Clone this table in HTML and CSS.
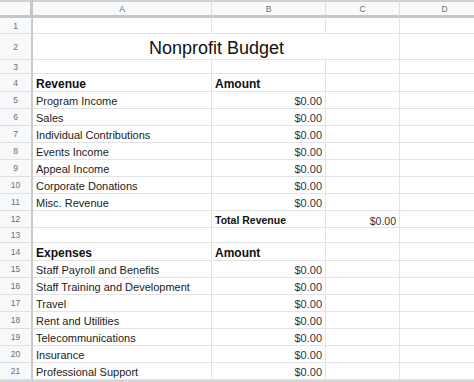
FILE: index.html
```html
<!DOCTYPE html>
<html>
<head>
<meta charset="utf-8">
<link rel="stylesheet" href="styles.css">
</head>
<body>
<div class="sheet">
  <div class="corner"></div>
  <div class="colh">A</div>
  <div class="colh">B</div>
  <div class="colh">C</div>
  <div class="colh">D</div>

  <div class="rowh r-1">1</div><div class="c"></div><div class="c"></div><div class="c"></div><div class="c"></div>

  <div class="rowh">2</div><div class="c title">Nonprofit Budget</div><div class="c"></div>

  <div class="rowh">3</div><div class="c"></div><div class="c"></div><div class="c"></div><div class="c"></div>

  <div class="rowh">4</div><div class="c hd">Revenue</div><div class="c hd">Amount</div><div class="c"></div><div class="c"></div>

  <div class="rowh">5</div><div class="c">Program Income</div><div class="c num">$0.00</div><div class="c"></div><div class="c"></div>
  <div class="rowh">6</div><div class="c">Sales</div><div class="c num">$0.00</div><div class="c"></div><div class="c"></div>
  <div class="rowh">7</div><div class="c">Individual Contributions</div><div class="c num">$0.00</div><div class="c"></div><div class="c"></div>
  <div class="rowh">8</div><div class="c">Events Income</div><div class="c num">$0.00</div><div class="c"></div><div class="c"></div>
  <div class="rowh">9</div><div class="c">Appeal Income</div><div class="c num">$0.00</div><div class="c"></div><div class="c"></div>
  <div class="rowh">10</div><div class="c">Corporate Donations</div><div class="c num">$0.00</div><div class="c"></div><div class="c"></div>
  <div class="rowh">11</div><div class="c">Misc. Revenue</div><div class="c num">$0.00</div><div class="c"></div><div class="c"></div>
  <div class="rowh">12</div><div class="c"></div><div class="c tot">Total Revenue</div><div class="c num small">$0.00</div><div class="c"></div>
  <div class="rowh">13</div><div class="c"></div><div class="c"></div><div class="c"></div><div class="c"></div>

  <div class="rowh">14</div><div class="c hd">Expenses</div><div class="c hd">Amount</div><div class="c"></div><div class="c"></div>

  <div class="rowh">15</div><div class="c">Staff Payroll and Benefits</div><div class="c num">$0.00</div><div class="c"></div><div class="c"></div>
  <div class="rowh">16</div><div class="c">Staff Training and Development</div><div class="c num">$0.00</div><div class="c"></div><div class="c"></div>
  <div class="rowh">17</div><div class="c">Travel</div><div class="c num">$0.00</div><div class="c"></div><div class="c"></div>
  <div class="rowh">18</div><div class="c">Rent and Utilities</div><div class="c num">$0.00</div><div class="c"></div><div class="c"></div>
  <div class="rowh">19</div><div class="c">Telecommunications</div><div class="c num">$0.00</div><div class="c"></div><div class="c"></div>
  <div class="rowh">20</div><div class="c">Insurance</div><div class="c num">$0.00</div><div class="c"></div><div class="c"></div>
  <div class="rowh">21</div><div class="c">Professional Support</div><div class="c num">$0.00</div><div class="c"></div><div class="c"></div>
</div>
<div class="bottombar"></div>
</body>
</html>
```

FILE: styles.css
```css
html, body {
  margin: 0;
  padding: 0;
  background: #ffffff;
  overflow: hidden;
  width: 474px;
  height: 382px;
}

body {
  font-family: "Liberation Sans", Arial, sans-serif;
  color: #222222;
}

.sheet {
  display: grid;
  grid-template-columns: 33px 179px 114px 74px 90px;
  grid-template-rows: 18px 16px 26px 14px 18px repeat(8, 17px) 15px 18px repeat(7, 17px);
  width: 490px;
}

.corner {
  background: #f8f9fa;
  border-top: 2px solid #cfd1d3;
  border-right: 3px solid #c4c6c8;
  border-bottom: 3px solid #c4c6c8;
  box-sizing: border-box;
}

.colh {
  background: #f8f9fa;
  border-top: 2px solid #cfd1d3;
  border-right: 1px solid #dcdfe2;
  border-bottom: 3px solid #c4c6c8;
  box-sizing: border-box;
  font-size: 8.5px;
  color: #6b6e72;
  display: flex;
  align-items: center;
  justify-content: center;
}

.rowh {
  background: #f8f9fa;
  border-right: 2px solid #c8cacc;
  border-bottom: 1px solid #dcdfe2;
  box-sizing: border-box;
  font-size: 8.5px;
  color: #6b6e72;
  display: flex;
  align-items: center;
  justify-content: center;
}

.c {
  border-right: 1px solid #e2e3e4;
  border-bottom: 1px solid #e2e3e4;
  box-sizing: border-box;
  font-size: 11px;
  line-height: 13px;
  display: flex;
  align-items: flex-end;
  padding: 0 3px 0.5px 3px;
  white-space: nowrap;
  overflow: visible;
}

.title {
  grid-column: 2 / 5;
  justify-content: center;
  font-size: 18px;
  line-height: 21px;
  padding-bottom: 0;
  padding-left: 4px;
  color: #111111;
}

.hd {
  font-weight: bold;
  font-size: 12px;
  line-height: 14px;
  color: #111111;
  padding-bottom: 0;
}

.tot {
  font-weight: bold;
  font-size: 10.5px;
  line-height: 12px;
  color: #111111;
  padding-bottom: 1px;
  padding-left: 3px;
}

.num {
  justify-content: flex-end;
  color: #333333;
}

.small {
  font-size: 10.5px;
  line-height: 11px;
  padding-bottom: 0;
}

.bottombar {
  height: 2px;
  background: #d4d6d8;
  width: 474px;
}
```
